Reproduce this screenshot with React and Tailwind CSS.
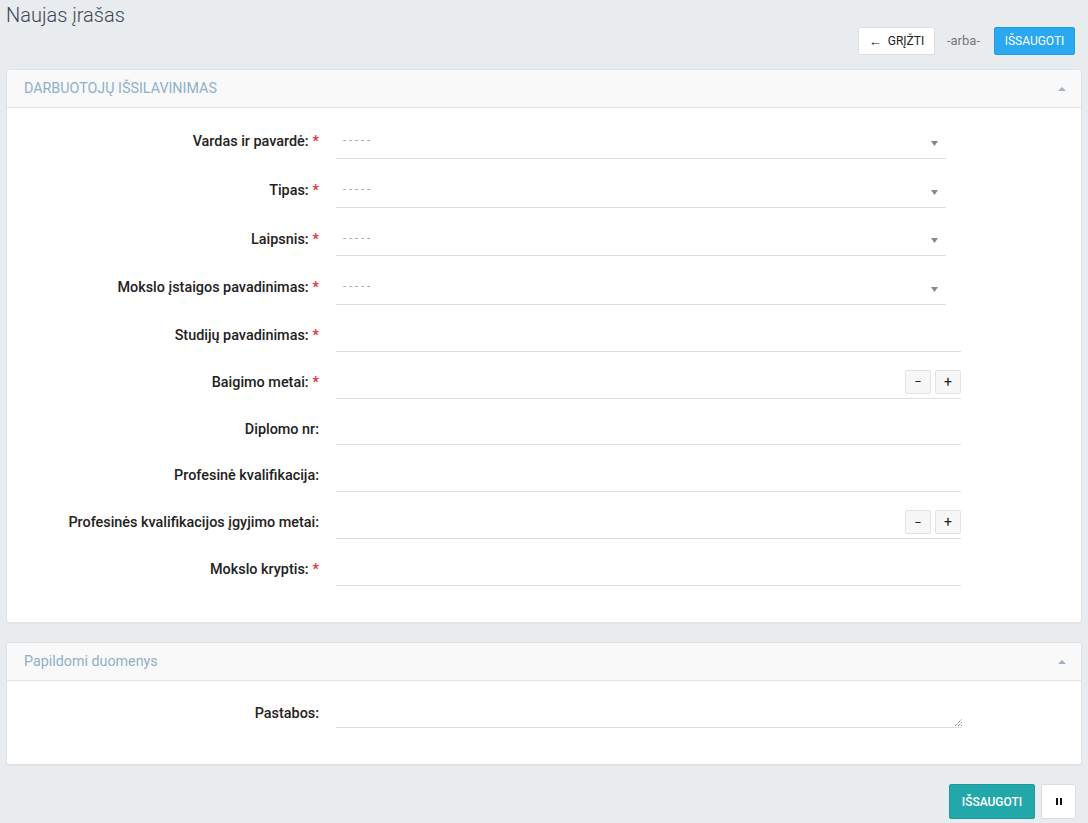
import React from 'react';

const font = { fontFamily: 'Roboto, "Noto Sans", sans-serif' };

const fields = [
  { label: 'Vardas ir pavardė:', required: true, type: 'select' },
  { label: 'Tipas:', required: true, type: 'select' },
  { label: 'Laipsnis:', required: true, type: 'select' },
  { label: 'Mokslo įstaigos pavadinimas:', required: true, type: 'select' },
  { label: 'Studijų pavadinimas:', required: true, type: 'text' },
  { label: 'Baigimo metai:', required: true, type: 'number' },
  { label: 'Diplomo nr:', required: false, type: 'text' },
  { label: 'Profesinė kvalifikacija:', required: false, type: 'text' },
  { label: 'Profesinės kvalifikacijos įgyjimo metai:', required: false, type: 'number' },
  { label: 'Mokslo kryptis:', required: true, type: 'text' },
];

const Caret = () => (
  <svg width="8" height="5" viewBox="0 0 8 5" className="text-[#9bb3c8]">
    <path d="M0 5 L4 1 L8 5 Z" fill="currentColor" />
  </svg>
);

const Label = ({ text, required }) => (
  <div className="w-[312px] shrink-0 text-right text-[14.4px] font-medium text-[#222]">
    {text}
    {required && <span className="text-[#e8273a] ml-[4px]">*</span>}
  </div>
);

const Field = ({ field }) => {
  if (field.type === 'select') {
    return (
      <div className="flex items-center h-[34px] mb-[14.7px]">
        <Label text={field.label} required={field.required} />
        <div className="ml-[17px] w-[610px] h-full border-b border-[#dcdfe0] flex items-center justify-between pl-[7px] pr-[8px]">
          <span className="text-[11px] text-[#999] tracking-[3px]">-----</span>
          <svg width="7" height="5" viewBox="0 0 7 5" className="mt-[4px]">
            <path d="M0 0 L7 0 L3.5 5 Z" fill="#888" />
          </svg>
        </div>
      </div>
    );
  }
  return (
    <div className="flex items-center h-[32px] mb-[14.8px]">
      <Label text={field.label} required={field.required} />
      <div className="ml-[17px] w-[625px] h-full border-b border-[#dcdfe0] flex items-center justify-end gap-[4px]">
        {field.type === 'number' && (
          <>
            <button className="w-[26px] h-[24px] border border-[#e3e3e3] bg-[#f7f7f7] rounded-[2px] text-[13px] text-[#222] flex items-center justify-center">−</button>
            <button className="w-[26px] h-[24px] border border-[#e3e3e3] bg-[#f7f7f7] rounded-[2px] text-[14px] text-[#222] flex items-center justify-center">+</button>
          </>
        )}
      </div>
    </div>
  );
};

const Panel = ({ title, children, className = '' }) => (
  <div className={`bg-white border border-[#dfe3e6] rounded-[3px] shadow-[0_1px_1px_rgba(0,0,0,0.04)] ${className}`}>
    <div className="h-[38px] bg-[#f9f9f9] border-b border-[#dfe3e6] flex items-center justify-between pl-[17px] pr-[15px] rounded-t-[3px]">
      <span className="text-[14.3px] text-[#8fb0c9]">{title}</span>
      <Caret />
    </div>
    {children}
  </div>
);

export default function App() {
  return (
    <div style={font} className="min-h-[823px] bg-[#e9ecef] px-[6px] pb-[5px]">
      <h1 className="text-[20px] font-light text-[#3c4650] pt-[1px] leading-[28px]">Naujas įrašas</h1>
      <div className="flex justify-end items-center pr-[7px] mt-[-2px]">
        <button className="h-[28px] w-[77px] bg-white border border-[#dcdfe2] rounded-[2px] text-[12px] text-[#222] flex items-center justify-center gap-[6px]">
          <span className="text-[13px] leading-none">←</span>GRĮŽTI
        </button>
        <span className="text-[13px] text-[#777] ml-[12px]">-arba-</span>
        <button className="h-[28px] w-[81px] bg-[#2aa8f2] border border-[#1d9de6] rounded-[2px] text-[12px] text-white flex items-center justify-center ml-[14px]">
          IŠSAUGOTI
        </button>
      </div>

      <Panel title="DARBUOTOJŲ IŠSILAVINIMAS" className="mt-[14px]">
        <div className="pt-[17px] pb-[21.5px]">
          {fields.map((f) => (
            <Field key={f.label} field={f} />
          ))}
        </div>
      </Panel>

      <Panel title="Papildomi duomenys" className="mt-[19px]">
        <div className="pt-[18px] pb-[36px] flex items-center">
          <Label text="Pastabos:" required={false} />
          <div className="ml-[17px] w-[626px] h-[29px] border-b border-[#dcdfe0] flex items-end justify-end pb-[1px]">
            <svg width="7" height="7" viewBox="0 0 7 7">
              <path d="M0 7 L7 0 M3 7 L7 3 M6 7 L7 6" stroke="#555" strokeWidth="1" strokeDasharray="1 1" />
            </svg>
          </div>
        </div>
      </Panel>

      <div className="flex justify-end items-center gap-[6px] mt-[19px] pr-[6px]">
        <button className="h-[35px] w-[86px] bg-[#22a8aa] border border-[#1b9a9c] rounded-[2px] text-[12px] font-medium text-white">
          IŠSAUGOTI
        </button>
        <button className="h-[35px] w-[35px] bg-white border border-[#dcdfe2] rounded-[2px] flex items-center justify-center gap-[2px]">
          <span className="w-[2px] h-[7px] bg-[#111]" />
          <span className="w-[2px] h-[7px] bg-[#111]" />
        </button>
      </div>
    </div>
  );
}
